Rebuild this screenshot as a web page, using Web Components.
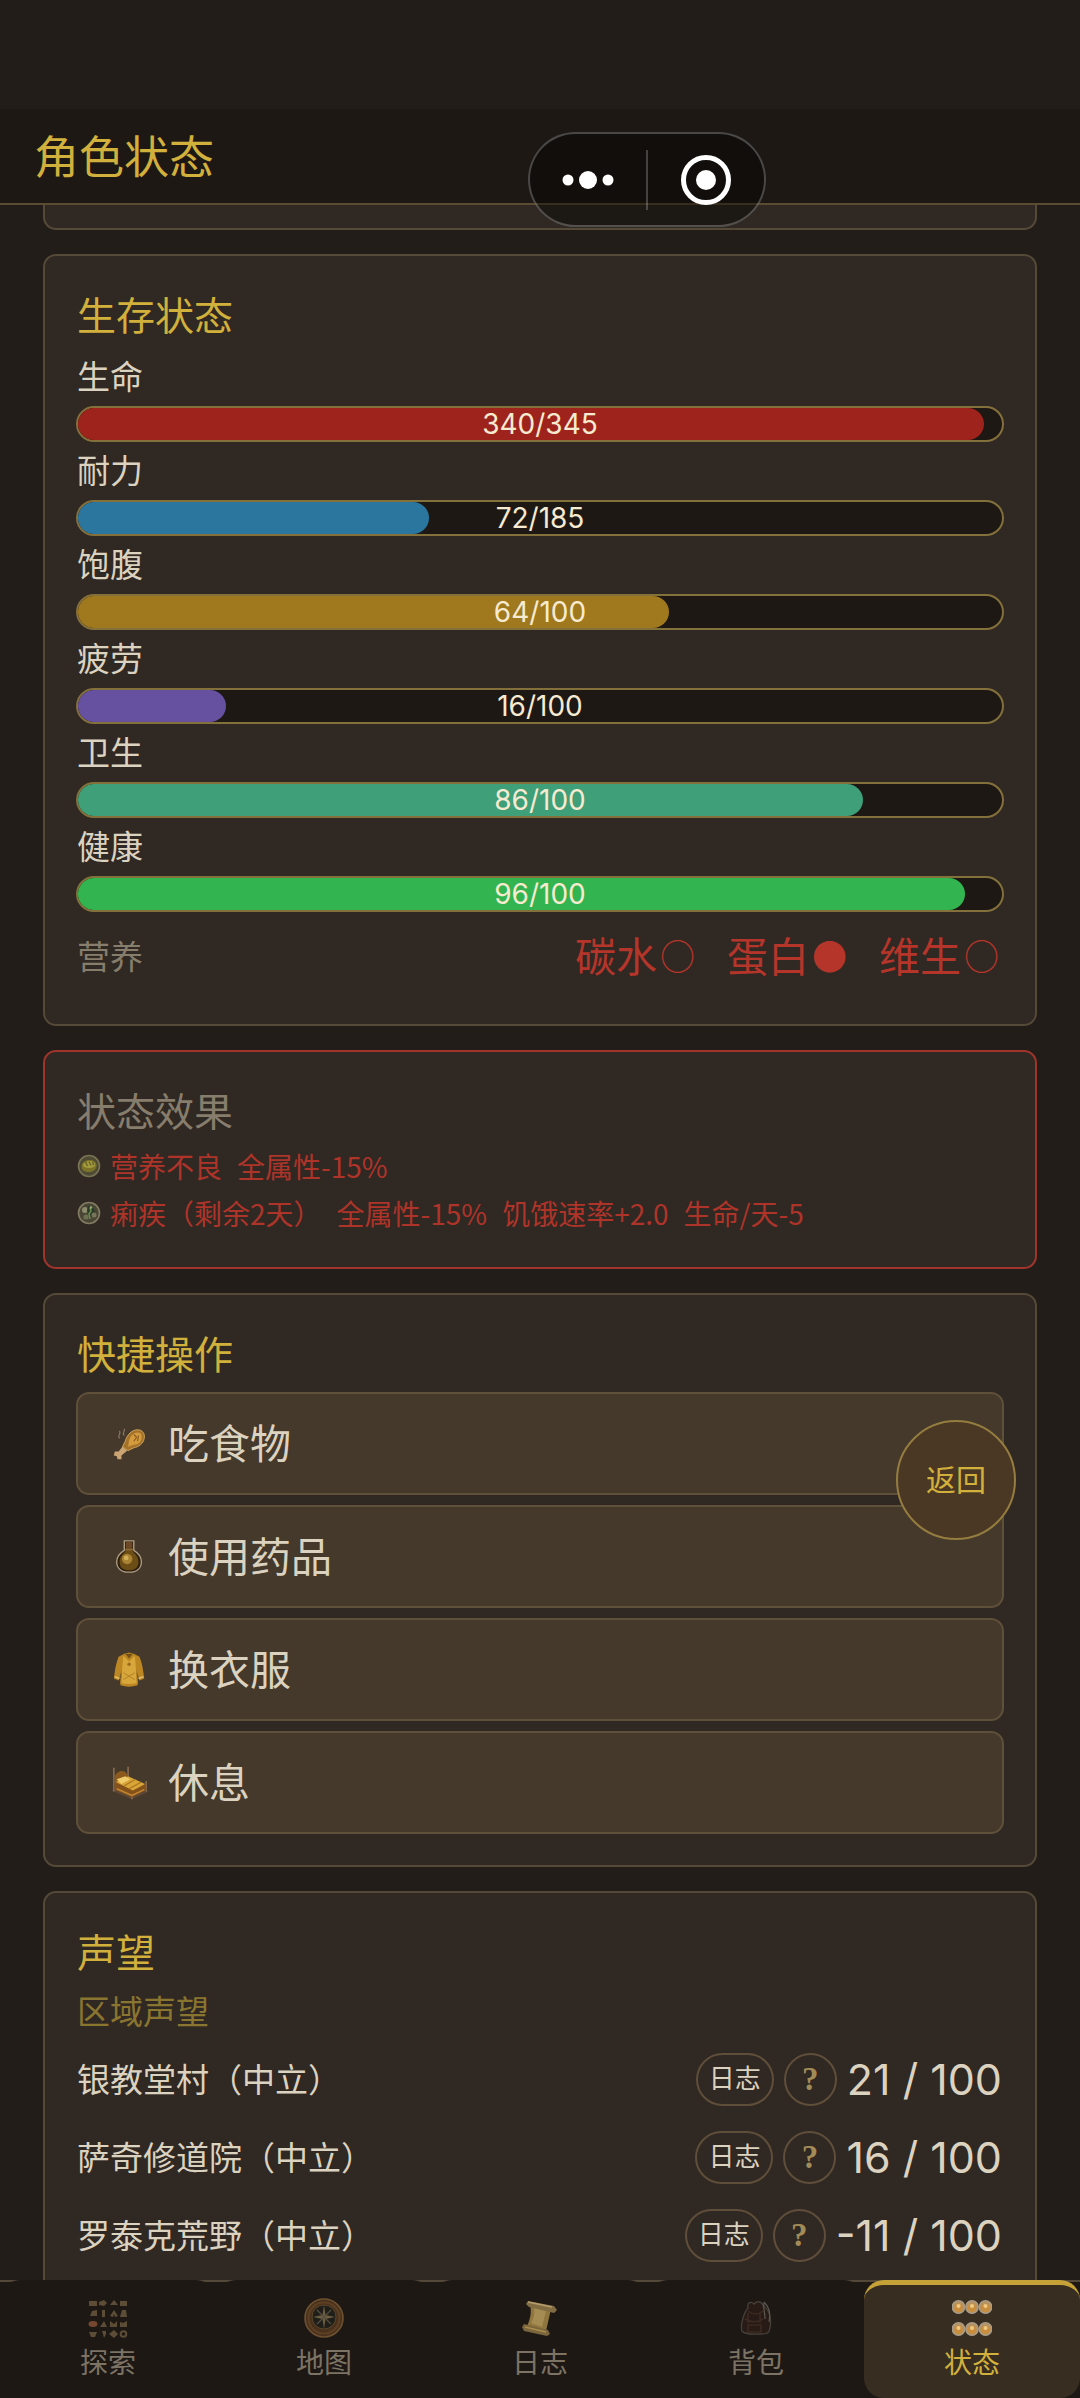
<!DOCTYPE html>
<html lang="zh-CN">
<head>
<meta charset="utf-8">
<meta name="viewport" content="width=device-width, initial-scale=1">
<title>角色状态</title>
<style>
  :root {
    --bg: #221d19;
    --bar: #1d1814;
    --card: #302822;
    --line: #554a38;
    --gold: #d2b03c;
    --text: #dcd2c0;
    --muted: #877d6c;
    --danger: #b5352b;
  }
  html, body { height: 100%; }
  body {
    margin: 0;
    background: var(--bg);
    color: var(--text);
    font-family: Inter, "Noto Sans CJK SC", sans-serif;
    font-size: 33px;
  }
</style>
</head>
<body>
<game-app>
  <app-header slot="header">角色状态</app-header>

  <info-card class="tail"></info-card>

  <info-card heading="生存状态">
    <stat-bar label="生命" value="340/345" fill="98" color="#9e231c"></stat-bar>
    <stat-bar label="耐力" value="72/185" fill="38" color="#2a769f"></stat-bar>
    <stat-bar label="饱腹" value="64/100" fill="64" color="#a0781d"></stat-bar>
    <stat-bar label="疲劳" value="16/100" fill="16" color="#6650a0"></stat-bar>
    <stat-bar label="卫生" value="86/100" fill="85" color="#3f9f79"></stat-bar>
    <stat-bar label="健康" value="96/100" fill="96" color="#32b550"></stat-bar>
    <nutrition-row label="营养">
      <nutrient-mark mark="○">碳水</nutrient-mark>
      <nutrient-mark mark="●">蛋白</nutrient-mark>
      <nutrient-mark mark="○">维生</nutrient-mark>
    </nutrition-row>
  </info-card>

  <info-card heading="状态效果" tone="danger">
    <effect-row icon="bread"><span>营养不良</span><span>全属性-15%</span></effect-row>
    <effect-row icon="germ"><span>痢疾（剩余2天）</span><span>全属性-15%</span><span>饥饿速率+2.0</span><span>生命/天-5</span></effect-row>
  </info-card>

  <info-card heading="快捷操作">
    <action-list>
      <action-button icon="food">吃食物</action-button>
      <action-button icon="potion">使用药品</action-button>
      <action-button icon="shirt">换衣服</action-button>
      <action-button icon="bed">休息</action-button>
    </action-list>
  </info-card>

  <info-card heading="声望" subheading="区域声望">
    <reputation-row name="银教堂村（中立）" score="21 / 100"></reputation-row>
    <reputation-row name="萨奇修道院（中立）" score="16 / 100"></reputation-row>
    <reputation-row name="罗泰克荒野（中立）" score="-11 / 100"></reputation-row>
  </info-card>

  <tab-bar slot="footer">
    <tab-item icon="grid">探索</tab-item>
    <tab-item icon="compass">地图</tab-item>
    <tab-item icon="scroll">日志</tab-item>
    <tab-item icon="bag">背包</tab-item>
    <tab-item icon="orbs" active>状态</tab-item>
  </tab-bar>

  <back-button slot="overlay">返回</back-button>
  <host-capsule slot="overlay"></host-capsule>
</game-app>

<script>
const ICONS = {
  bread: `<circle cx="12" cy="12" r="10.5" fill="#4e4b35" stroke="#787354" stroke-width="1.6"/>
    <path d="M4.500 13c0-5 4-7 8-7s7.500 2 7 6-4 6-8 6-7-2-7-5z" fill="#7d7328"/>
    <path d="M6 11c1-3 4-4 7-4s5 2 5 4-3 3-6 3-6-1-6-3z" fill="#a39a3e"/>
    <path d="M8.500 8l2 4M12 7.500l2 4M15.500 8l1 3" stroke="#625c23" stroke-width="1.200" fill="none"/>`,
  germ: `<circle cx="12" cy="12" r="10.500" fill="#494635" stroke="#817b61" stroke-width="1.600"/>
    <circle cx="8" cy="9" r="3" fill="#8c8b6d"/><path d="M11 5l5 1 2 5-3 5-4-2-1-5z" fill="#2c3a2a"/>
    <circle cx="17" cy="14" r="2.500" fill="#77765a"/><circle cx="9" cy="16" r="2.600" fill="#6d7051"/>
    <path d="M13 7l1 3-2 3 1 5" stroke="#69864c" stroke-width="1.600" fill="none"/><circle cx="14" cy="6.500" r="1.300" fill="#9aa774"/>`,
  food: `<path d="M15 17c2-7 7-12 13-12 5 0 8 4 7 9-1 6-6 9-11 10l-6 3-6-4z" fill="#a4722a" stroke="#cda45b" stroke-width="1"/>
    <path d="M19 16c2-5 5-8 9-8 4 0 5 3 4 7-1 4-5 6-9 6l-5 2z" fill="#d39b3d"/>
    <path d="M12 23l5 4-6 5 0 4-4 0-1-3-3-1 1-4 4 0z" fill="#caa473"/>
    <path d="M24 10l3 3-3 4M29 11l-1 6" stroke="#8c5c20" stroke-width="1.200" fill="none"/>
    <path d="M9 14c-3-3 2-4 0-8M14 11c-3-2 1-4 0-7" stroke="#8b7b66" stroke-width="1.200" fill="none"/>`,
  potion: `<path d="M14 3h10v10c5 3 8 6 8 12 0 7-5 11-13 11S6 32 6 25c0-6 3-9 8-12z" fill="#2d2011" stroke="#b3a084" stroke-width="1.400"/>
    <path d="M16 12h6c1 4 7 6 7 13 0 6-4 9-10 9S9 31 9 25c0-7 6-9 7-13z" fill="#6d4d16"/><circle cx="17" cy="22" r="5.500" fill="#a98333"/>
    <circle cx="16" cy="21" r="2.500" fill="#cfae55"/><rect x="15.500" y="4" width="7" height="7" rx="2" fill="#6e4628"/>
    <path d="M15 12h8" stroke="#8d6c35" stroke-width="2"/>`,
  shirt: `<path d="M14 3l5-1.500L24 3l6 3c3 7 4 15 5 23l-5 2-3-10 1 15c-6 2-12 2-18 0l1-15-3 10-5-2C4 21 5 13 8 6z" fill="#bc8723"/>
    <path d="M13 5l6 6 6-6 1 10 1 19c-6 1-10 1-16 0l1-19z" fill="#d8a73b"/>
    <path d="M15 3l4 5 4-5z" fill="#755018"/><circle cx="19" cy="14" r="1.800" fill="#9c6b1c"/>
    <path d="M11 20l-1 15M27 20l1 15M13 30l12-7M25 30l-12-7" stroke="#b07f27" stroke-width="1"/>
    <path d="M4 27l5 2M29 29l5-2" stroke="#e5bf67" stroke-width="1.600"/>`,
  bed: `<path d="M0 28l22 9 18-8-18-9z" fill="#5c4735"/>
    <path d="M3 4v25M18 3v13M37 18v11M22 26v11" stroke="#84684e" stroke-width="1.800"/>
    <path d="M4 14c1-7 10-9 13-3v8L4 25z" fill="#8b5a1c"/>
    <path d="M4 21l13-7 19 8v6l-14 7-18-8z" fill="#84511b"/>
    <path d="M5 19l13-6 18 8-13 7z" fill="#d9a537"/><path d="M6 16l9-3 5 3-9 5z" fill="#efcb6a"/>
    <path d="M14 23l12-7M19 26l13-7" stroke="#a67520" stroke-width="1.200"/>
    <path d="M6 26l16 7 13-6" stroke="#c18832" stroke-width="1.600" fill="none"/>`,
  grid: `<g fill="#5d4d36"><path d="M1 3h8v5H1zM11 4l5-2 3 3-3 3-5-1zM22 7l4-5 4 5zM32 3h7v5h-7z"/>
    <path d="M2 18l2-5 5-1v6zM14 12h3v7h-3zM22 18l4-6 4 6-3 1-1-3-1 3zM34 12h4l1 7h-7z"/>
    <path d="M22 29v-6l4 3 3-3v6zM12 29l4-6 3 6zM32 24l3 1 4-2v6h-7z"/>
    <path d="M1 34h8l-2 5H3zM14 33h4v3l-2 4-1-4zM21 36l5-4 4 4-4 4z"/></g>
    <ellipse cx="5" cy="26" rx="4.500" ry="3" fill="#76482f"/><circle cx="35.500" cy="36" r="2.800" fill="none" stroke="#5d4d36" stroke-width="2"/>`,
  compass: `<circle cx="20" cy="20" r="19" fill="#49311d" stroke="#6d5130" stroke-width="1.600"/>
    <circle cx="20" cy="20" r="15.500" fill="none" stroke="#5e4124" stroke-width="2"/>
    <circle cx="20" cy="19" r="12" fill="#1f1e19" stroke="#5a4729" stroke-width="1"/>
    <path d="M20 7l1.500 10L31 19l-9.500 2L20 31l-1.500-10L9 19l9.500-2z" fill="#6b5e41"/>
    <path d="M13 12l7 7 7-7M13 26l7-7 7 7" stroke="#565040" stroke-width="1.200" fill="none"/>`,
  scroll: `<path d="M10 7l21 4-5 22-19-5c3-6 5-14 3-21z" fill="#8f763f"/>
    <path d="M14 10l12 3-4 16-11-4c3-5 4-10 3-15z" fill="#a58c52"/>
    <path d="M8 3l26 5 3 4-3 3-8-2-17-4-3-3z" fill="#816c43"/><path d="M8 4l24 5" stroke="#b59e6b" stroke-width="1.600"/>
    <path d="M4 26l24 6 2 4-3 2L4 33l-2-4z" fill="#7a653d"/><path d="M5 29l21 5" stroke="#a98c4c" stroke-width="1.600"/>`,
  bag: `<path d="M12 10c-1-6 3-7 6-4 3-4 9-2 9 2 6 3 9 12 7 22-1 6-4 6-10 6s-15 1-18-3c-2-5 2-19 6-23z" fill="#281b15" stroke="#46403a" stroke-width="1.300"/>
    <path d="M12 13c5 4 10 4 15 0M9 21c7 4 12 4 18 0M12 27h13v7H12zM12 15v10M24 15v10" stroke="#3b2a21" stroke-width="1.600" fill="none"/>
    <path d="M28 4c5 5 7 12 5 20M28 5c-1 5 1 10 1 16" stroke="#5d5951" stroke-width="1.200" fill="none"/>`,
  orbs: [9, 31].map(y => [6.500, 20, 33.500].map(x =>
    `<circle cx="${x}" cy="${y}" r="6.300" fill="#b8925f" stroke="#a99e8c" stroke-width="1.200"/><circle cx="${x}" cy="${y + 1}" r="4" fill="#c98e3d"/><circle cx="${x}" cy="${y - 1}" r="2" fill="#efc982"/>`
  ).join("")).join("")
};
const BOX = { bread: 24, germ: 24 };

function define(tag, css, html) {
  const template = document.createElement("template");
  customElements.define(tag, class extends HTMLElement {
    constructor() {
      super();
      this.attachShadow({ mode: "open" });
    }
    connectedCallback() {
      if (this.shadowRoot.childNodes.length) return;
      template.innerHTML = `<style>*{box-sizing:border-box}${css}</style>` + html(this);
      this.shadowRoot.append(template.content.cloneNode(true));
    }
  });
}

define("game-icon", `
  :host { display: block; flex: none; width: 38px; height: 38px; }
  svg { display: block; width: 100%; height: 100%; }
`, el => {
  const name = el.getAttribute("name"), size = BOX[name] || 40;
  return `<svg viewBox="0 0 ${size} ${size}" aria-hidden="true">${ICONS[name]}</svg>`;
});

define("game-app", `
  :host { display: flex; flex-direction: column; height: 100vh; padding-top: 109px; box-sizing: border-box; }
  main { flex: 1; min-height: 0; overflow-y: auto; scrollbar-width: none;
    display: flex; flex-direction: column; gap: 24px; padding: 0 43px; }
`, () => `<slot name="header"></slot><main><slot></slot></main><slot name="footer"></slot><slot name="overlay"></slot>`);

define("app-header", `
  :host { display: block; background: var(--bar); border-bottom: 2px solid #5b4c31; padding: 15px 34px 11px; }
  h1 { margin: 0; font-size: 45px; line-height: 68px; font-weight: 400; color: var(--gold); }
`, () => `<h1><slot></slot></h1>`);

define("info-card", `
  :host { display: block; flex: none; box-sizing: border-box; padding: 31px; background: var(--card);
    border: 2px solid var(--line); border-radius: 13px; }
  :host(.tail) { height: 25px; padding: 0; border-top: 0; border-radius: 0 0 13px 13px; }
  :host([tone=danger]) { border-color: #a0342b; }
  h2 { margin: 0 1px 8px; font-size: 39px; line-height: 58px; font-weight: 400; color: var(--gold); }
  :host([tone=danger]) h2 { color: var(--muted); }
  h3 { margin: 0 1px 6px; font-size: 33px; line-height: 44px; font-weight: 400; color: #8a7530; }
`, el => {
  const h = el.getAttribute("heading"), s = el.getAttribute("subheading");
  return (h ? `<h2>${h}</h2>` : "") + (s ? `<h3>${s}</h3>` : "") + `<slot></slot>`;
});

define("stat-bar", `
  :host { display: block; margin-bottom: 5px; }
  .label { font-size: 33px; line-height: 49px; margin: 0 1px 4px; }
  .track { display: grid; height: 36px; border-radius: 18px; background: var(--bar); border: 2px solid #83703a; }
  .fill, .value { grid-area: 1 / 1; }
  .fill { border-radius: 16px; }
  .value { text-align: center; font-size: 28px; line-height: 32px; color: #f6ead0; }
`, el => `<div class="label" id="l">${el.getAttribute("label")}</div>
  <div class="track" role="progressbar" aria-labelledby="l" aria-valuenow="${el.getAttribute("fill")}">
    <div class="fill" style="width:${el.getAttribute("fill")}%;background:${el.getAttribute("color")}"></div>
    <div class="value">${el.getAttribute("value")}</div>
  </div>`);

define("nutrition-row", `
  :host { display: flex; justify-content: space-between; align-items: center; padding: 9px 0 5px; line-height: 62px; }
  .label { color: var(--muted); margin-left: 1px; }
  .items { display: flex; gap: 27px; color: var(--danger); }
`, el => `<span class="label">${el.getAttribute("label")}</span><div class="items"><slot></slot></div>`);

define("nutrient-mark", `
  :host { display: flex; align-items: center; gap: 3px; padding-right: 5px; font-size: 41px; }
  .mark { font-family: "Noto Sans CJK SC", sans-serif; font-size: 35px; line-height: 58px; padding-bottom: 4px; }
`, el => `<span><slot></slot></span><span class="mark">${el.getAttribute("mark")}</span>`);

define("effect-row", `
  :host { display: flex; align-items: center; gap: 15px; padding-bottom: 13px; color: #ae342a;
    font-family: "Noto Sans CJK SC", sans-serif; font-size: 28px; line-height: 34px; }
  :host(:last-child) { padding-bottom: 6px; }
  game-icon { width: 24px; height: 24px; margin: 0 -6px 0 1px; }
`, el => `<game-icon name="${el.getAttribute("icon")}"></game-icon><slot></slot>`);

define("action-list", `:host { display: flex; flex-direction: column; gap: 10px; }`, () => `<slot></slot>`);

define("action-button", `
  :host { display: block; }
  button { display: flex; align-items: center; gap: 19px; width: 100%; height: 103px; padding: 0 33px;
    background: #45392b; border: 2px solid #5f503a; border-radius: 13px; font: inherit; font-size: 41px;
    line-height: 62px; color: var(--text); text-align: left; cursor: pointer; }
`, el => `<button type="button"><game-icon name="${el.getAttribute("icon")}"></game-icon><span><slot></slot></span></button>`);

define("reputation-row", `
  :host { display: flex; align-items: center; gap: 10px; height: 78px; }
  .name { flex: 1; padding: 0 0 3px 1px; }
  button { display: grid; place-items: center; height: 53px; padding: 0 11px; background: none;
    border: 2px solid #5f4f3a; border-radius: 27px; font: inherit; font-size: 26px; line-height: 36px; color: var(--text); cursor: pointer; }
  .help { width: 53px; padding: 0; font: bold 33px/36px "Liberation Serif", serif; color: #a38b58; }
  .score { font-size: 43px; line-height: 64px; padding-right: 2px; }
`, el => `<span class="name">${el.getAttribute("name")}</span>
  <button type="button">日志</button><button type="button" class="help">?</button>
  <span class="score">${el.getAttribute("score")}</span>`);

define("tab-bar", `
  :host { display: block; flex: none; background: var(--bar); border-top: 2px solid #544839; }
  nav { display: flex; margin-top: -2px; }
`, () => `<nav><slot></slot></nav>`);

define("tab-item", `
  :host { flex: 1; }
  a { display: flex; flex-direction: column; align-items: center; gap: 5px; height: 118px; padding-top: 13px;
    border-top: 5px solid transparent; border-radius: 20px; background: var(--bar) border-box;
    font-size: 28px; line-height: 40px; color: #7c7365; text-decoration: none; }
  :host([active]) a { background: #372d21; border-top-color: #c5a238; color: var(--gold); }
  game-icon { width: 40px; height: 40px; }
`, el => `<a href="#"><game-icon name="${el.getAttribute("icon")}"></game-icon><span><slot></slot></span></a>`);

define("back-button", `
  :host { position: fixed; right: 64px; bottom: 858px; }
  button { width: 120px; height: 120px; padding: 0; border-radius: 50%; border: 2px solid #957d40; background: #4a3824;
    font: inherit; font-size: 30px; line-height: 40px; color: var(--gold); cursor: pointer; }
`, () => `<button type="button"><slot></slot></button>`);

define("host-capsule", `
  :host { position: fixed; top: 132px; left: calc(50% - 12px); display: flex; align-items: center; width: 238px; height: 95px;
    box-sizing: border-box; border: 2px solid rgba(255,255,255,.24); border-radius: 48px; background: rgba(0,0,0,.4); }
  button { flex: 1; display: grid; place-items: center; height: 60px; padding: 0; border: 0; background: none; cursor: pointer; }
  button + button { border-left: 2px solid rgba(255,255,255,.22); }
`, () => `<button type="button" aria-label="菜单"><svg width="54" height="54" viewBox="0 0 54 54" fill="#fff"><circle cx="7" cy="27" r="5.500"/><circle cx="27" cy="27" r="9"/><circle cx="47" cy="27" r="5.500"/></svg></button>
  <button type="button" aria-label="关闭"><svg width="52" height="52" viewBox="0 0 52 52"><circle cx="26" cy="26" r="22.500" fill="none" stroke="#fff" stroke-width="5"/><circle cx="26" cy="26" r="10" fill="#fff"/></svg></button>`);
</script>
</body>
</html>
